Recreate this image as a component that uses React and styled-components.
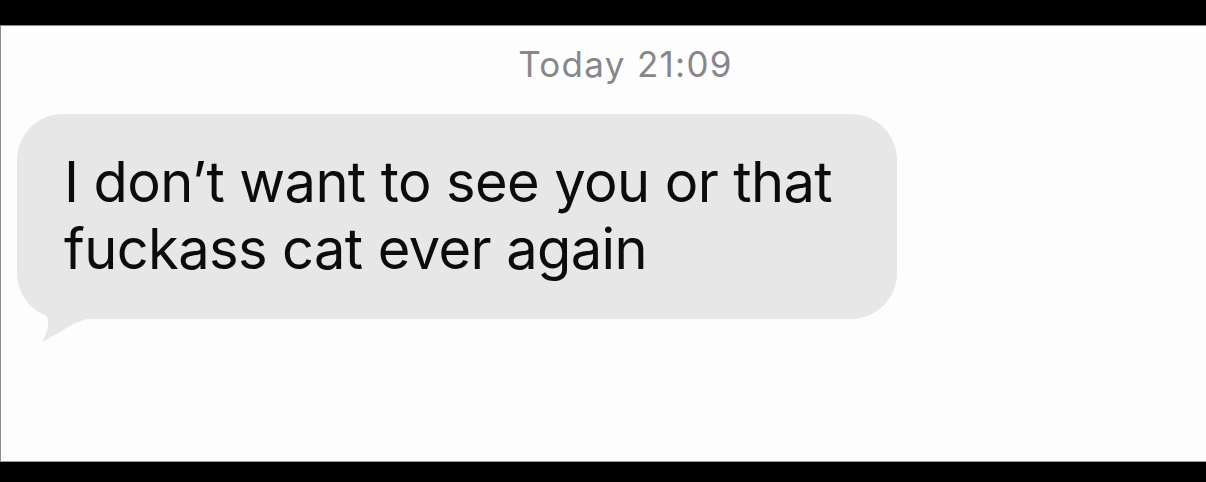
import styled, { createGlobalStyle } from 'styled-components';

const GlobalStyle = createGlobalStyle`
  html, body {
    margin: 0;
    padding: 0;
    background: #000;
  }

  #root {
    height: 482px;
  }
`;

const Page = styled.div`
  display: flex;
  flex-direction: column;
  height: 482px;
  width: 1206px;
  overflow: hidden;
`;

const Bar = styled.div`
  height: ${(p) => p.$height}px;
  flex-shrink: 0;
  background: #000;
`;

const Screen = styled.div`
  flex: 1;
  display: flex;
  flex-direction: column;
  background: #fdfdfd;
  border-left: 1px solid #8c8c8c;
  border-top: 1px solid #8a8a8a;
  border-bottom: 1px solid #9a9a9a;
  padding-left: 16px;
`;

const Timestamp = styled.div`
  align-self: center;
  margin-top: 18px;
  margin-left: 28px;
  font-family: Inter, 'Liberation Sans', sans-serif;
  font-size: 35px;
  line-height: 40px;
  color: #87878b;
  letter-spacing: 1.3px;
`;

const Bubble = styled.div`
  position: relative;
  box-sizing: border-box;
  width: 880px;
  margin-top: 30px;
  padding: 35px 40px 36px 47px;
  border-radius: 46px;
  background: #e7e7e8;
`;

const MessageText = styled.p`
  position: relative;
  z-index: 1;
  margin: 0;
  font-family: Inter, 'Liberation Sans', sans-serif;
  font-size: 56px;
  line-height: 67px;
  color: #0c0c0c;
  letter-spacing: -0.6px;
`;

const Tail = styled.svg`
  position: absolute;
  left: 0;
  top: 120px;
  width: 90px;
  height: 110px;
  fill: #e7e7e8;
`;

function BubbleTail() {
  return (
    <Tail viewBox="0 120 90 110">
      <path d="M0,120 L0,160 C2,178 22,190 29,200 C33,208 31,218 25,228 C38,222 52,210 70,205 L90,205 L90,120 Z" />
    </Tail>
  );
}

function App() {
  return (
    <>
      <GlobalStyle />
      <Page>
        <Bar $height={25} />
        <Screen>
          <Timestamp>Today 21:09</Timestamp>
          <Bubble>
            <BubbleTail />
            <MessageText>
              I don’t want to see you or that
              <br />
              fuckass cat ever again
            </MessageText>
          </Bubble>
        </Screen>
        <Bar $height={20} />
      </Page>
    </>
  );
}

export default App;
